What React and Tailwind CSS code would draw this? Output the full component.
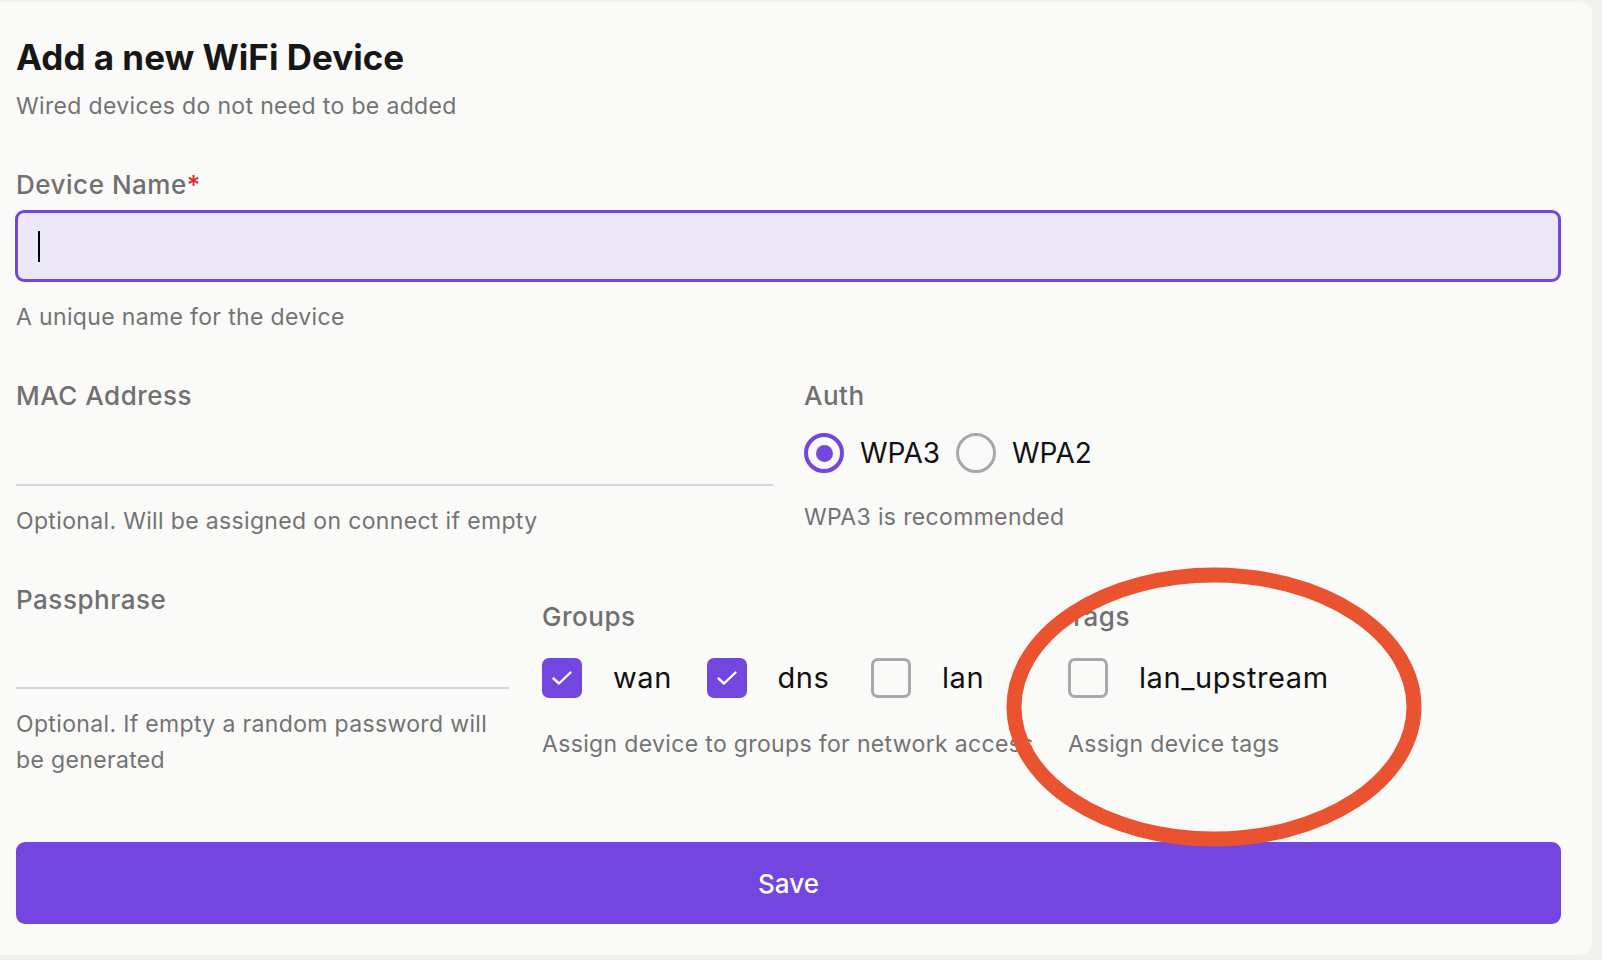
import React from "react";

function Check() {
  return (
    <svg width="24" height="24" viewBox="0 0 24 24" fill="none">
      <path d="M3.5 12.5l5.5 5L20.5 6.5" stroke="white" strokeWidth="2.4" strokeLinecap="round" strokeLinejoin="round" />
    </svg>
  );
}

function CheckItem({ label, checked }) {
  return (
    <div className="w-[164.5px] shrink-0 flex items-center gap-[31px]">
      {checked ? (
        <div className="w-[40px] h-[40px] shrink-0 rounded-[7px] bg-[#7446e0] flex items-center justify-center">
          <Check />
        </div>
      ) : (
        <div className="w-[40px] h-[40px] shrink-0 rounded-[7px] border-[3px] border-[#a8a8a8]" />
      )}
      <span className="text-[29px] leading-[40px] tracking-[0.02em] text-[#111] whitespace-nowrap">{label}</span>
    </div>
  );
}

function Radio({ label, checked }) {
  return (
    <div className="flex items-center gap-[16px]">
      {checked ? (
        <div className="w-[40px] h-[40px] rounded-full border-[4px] border-[#7446e0] flex items-center justify-center">
          <div className="w-[17px] h-[17px] rounded-full bg-[#7446e0]" />
        </div>
      ) : (
        <div className="w-[40px] h-[40px] rounded-full border-[3px] border-[#a8a8a8]" />
      )}
      <span className="text-[28px] leading-[40px] text-[#111]">{label}</span>
    </div>
  );
}

const help = "text-[23px] leading-[30px] tracking-[0.015em] text-[#737373]";
const lbl = "text-[26px] leading-[32px] font-medium tracking-[0.02em] text-[#707070]";

export default function App() {
  return (
    <div className="relative w-[1602px] h-[960px] bg-[#f2f1ee] pt-[2px] font-[family-name:Inter,sans-serif] overflow-hidden">
      <div className="w-[1592px] h-[953px] bg-[#fafaf9] rounded-r-[12px] pl-[16px] pr-[31px] pt-[35px]">
        <h1 className="text-[35px] leading-[40px] font-bold text-[#171717]">Add a new WiFi Device</h1>
        <p className={"mt-[14px] " + help}>Wired devices do not need to be added</p>

        <div className={"mt-[48px] " + lbl}>
          Device Name<span className="text-[#dc2626]">*</span>
        </div>
        <div className="mt-[9px] -ml-[1px] h-[72px] border-[3px] border-[#7446e0] bg-[#ece8f7] rounded-[9px] flex items-center pl-[20px]">
          <div className="w-[2px] h-[31px] bg-black" />
        </div>
        <p className={"mt-[20px] " + help}>A unique name for the device</p>

        <div className="mt-[48px] grid grid-cols-2 gap-x-[31px]">
          <div>
            <div className={lbl}>MAC Address</div>
            <div className="h-[74px] border-b-2 border-[#d6d6d6]" />
            <p className={"mt-[20px] " + help}>Optional. Will be assigned on connect if empty</p>
          </div>
          <div>
            <div className={lbl}>Auth</div>
            <div className="mt-[21px] flex items-center gap-[16px]">
              <Radio label="WPA3" checked />
              <Radio label="WPA2" />
            </div>
            <p className={"mt-[29px] " + help}>WPA3 is recommended</p>
          </div>
        </div>

        <div className="mt-[48px] grid grid-cols-3 gap-x-[33px]">
          <div>
            <div className={lbl}>Passphrase</div>
            <div className="h-[73px] border-b-2 border-[#d6d6d6]" />
            <p className="mt-[17px] text-[23px] leading-[36px] tracking-[0.015em] text-[#737373]">Optional. If empty a random password will be generated</p>
          </div>
          <div className="pt-[17px]">
            <div className={lbl}>Groups</div>
            <div className="mt-[25px] flex items-center">
              <CheckItem label="wan" checked />
              <CheckItem label="dns" checked />
              <CheckItem label="lan" />
            </div>
            <p className={"mt-[31px] whitespace-nowrap " + help}>Assign device to groups for network access</p>
          </div>
          <div className="pt-[17px]">
            <div className={lbl}>Tags</div>
            <div className="mt-[25px] flex items-center">
              <CheckItem label="lan_upstream" />
            </div>
            <p className={"mt-[31px] " + help}>Assign device tags</p>
          </div>
        </div>

        <button className="mt-[64px] w-full h-[82px] rounded-[9px] bg-[#7446e0] text-white text-[26px] font-medium flex items-center justify-center">
          Save
        </button>
      </div>

      <svg className="absolute left-[1000px] top-[560px] pointer-events-none" width="440" height="300" viewBox="0 0 440 300">
        <ellipse cx="214" cy="147" rx="200" ry="132" fill="none" stroke="#ea5330" strokeWidth="15" />
      </svg>
    </div>
  );
}
